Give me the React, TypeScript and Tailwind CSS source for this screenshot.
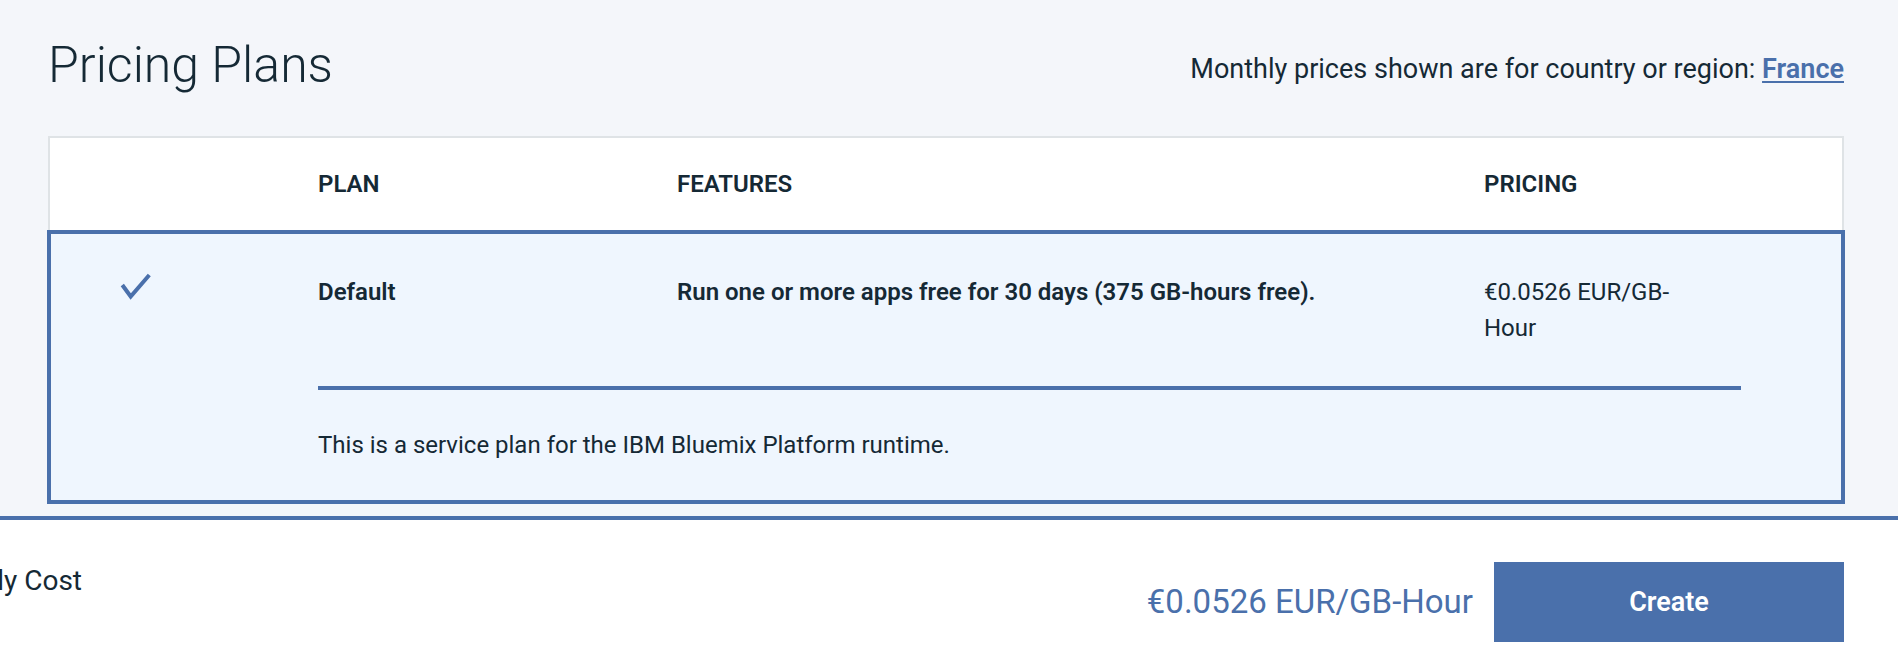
import React from "react";

const font = { fontFamily: "Roboto, 'Noto Sans', Arial, sans-serif" };

export default function App() {
  return (
    <div
      className="w-[1898px] h-[666px] bg-[#f4f6fa] text-[#152935] flex flex-col overflow-hidden"
      style={font}
    >
      {/* Top heading */}
      <div className="h-[136px] pt-[35px] pl-[48px] pr-[54px] flex justify-between items-start shrink-0">
        <h1 className="text-[50px] leading-[60px] font-light">Pricing Plans</h1>
        <p className="mt-[16px] text-[27px] leading-[36px]">
          Monthly prices shown are for country or region:{" "}
          <a className="text-[#4a70ab] font-semibold underline decoration-2 underline-offset-[3px]">
            France
          </a>
        </p>
      </div>

      {/* Table */}
      <div className="pl-[48px] pr-[54px] shrink-0">
        <div className="bg-white border-2 border-b-0 border-[#dfe3e6] h-[94px] grid grid-cols-[268px_359px_807px_257px] items-center text-[24px] leading-[36px] font-semibold">
          <div />
          <div>PLAN</div>
          <div>FEATURES</div>
          <div>PRICING</div>
        </div>
        <div className="-mx-px bg-[#eff6fe] border-4 border-[#4a70ab] pt-[40px] pb-[37px] text-[24px] leading-[36px]">
          <div className="grid grid-cols-[267px_359px_807px_257px] items-start">
            <div className="pl-[69px] -mt-px">
              <svg width="32" height="28" viewBox="0 0 32 28" fill="none">
                <polyline
                  points="2.3,12 10.7,23.5 29.3,2"
                  stroke="#4a70ab"
                  strokeWidth="4"
                  strokeLinejoin="miter"
                  fill="none"
                />
              </svg>
            </div>
            <div className="font-semibold">Default</div>
            <div className="font-semibold">
              Run one or more apps free for 30 days (375 GB-hours free).
            </div>
            <div className="w-[212px]">€0.0526 EUR/GB-Hour</div>
          </div>
          <div className="ml-[267px] w-[1423px] h-[4px] bg-[#4a70ab] mt-[40px]" />
          <div className="ml-[267px] mt-[37px]">
            This is a service plan for the IBM Bluemix Platform runtime.
          </div>
        </div>
      </div>

      <div className="h-[12px] shrink-0" />

      {/* Footer */}
      <div className="flex-1 bg-white border-t-4 border-[#4a70ab] flex items-start pr-[54px]">
        <div className="w-[82px] flex justify-end mt-[43px] shrink-0">
          <span className="whitespace-nowrap text-[28px] leading-[36px]">
            Estimated Monthly Cost
          </span>
        </div>
        <div className="flex-1" />
        <div className="flex items-center gap-[21px] mt-[42px]">
          <span className="text-[33px] leading-[40px] text-[#4a70ab]">
            €0.0526 EUR/GB-Hour
          </span>
          <button className="w-[350px] h-[80px] bg-[#4a70ab] text-white text-[27px] font-semibold">
            Create
          </button>
        </div>
      </div>
    </div>
  );
}
